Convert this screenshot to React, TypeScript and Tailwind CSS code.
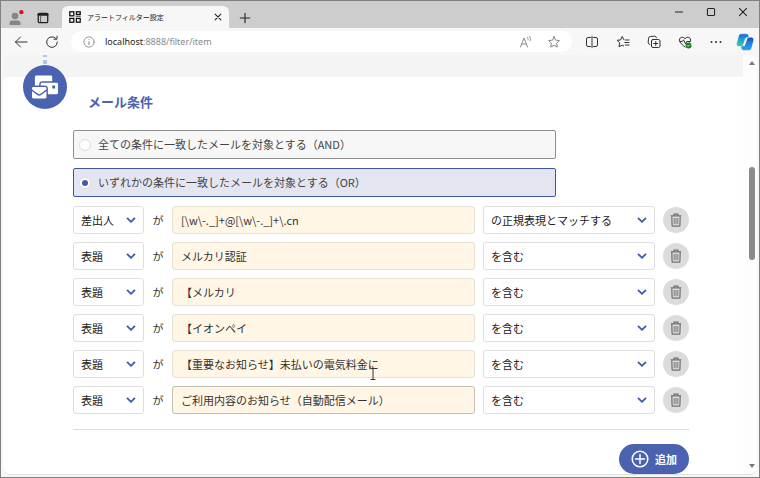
import { useState, type ReactNode } from 'react';
import clsx from 'clsx';
import { FaMailBulk } from 'react-icons/fa';

interface Condition {
  id: number;
  field: string;
  value: string;
  match: string;
}

const FIELDS = ['差出人', '表題', '本文'];
const MATCHES = ['を含む', 'を含まない', 'の正規表現とマッチする'];

const INITIAL: Condition[] = [
  { id: 1, field: '差出人', value: '[\\w\\-._]+@[\\w\\-._]+\\.cn', match: 'の正規表現とマッチする' },
  { id: 2, field: '表題', value: 'メルカリ認証', match: 'を含む' },
  { id: 3, field: '表題', value: '【メルカリ', match: 'を含む' },
  { id: 4, field: '表題', value: '【イオンペイ', match: 'を含む' },
  { id: 5, field: '表題', value: '【重要なお知らせ】未払いの電気料金に', match: 'を含む' },
  { id: 6, field: '表題', value: 'ご利用内容のお知らせ（自動配信メール）', match: 'を含む' },
];

function IconButton({ label, className, children }: { label: string; className?: string; children: ReactNode }) {
  return (
    <button type="button" aria-label={label} className={clsx('flex shrink-0 items-center justify-center', className)}>
      {children}
    </button>
  );
}

function Line({ children, className = 'size-3.5' }: { children: ReactNode; className?: string }) {
  return (
    <svg
      viewBox="0 0 14 14"
      fill="none"
      stroke="currentColor"
      strokeLinecap="round"
      strokeLinejoin="round"
      className={className}
    >
      {children}
    </svg>
  );
}

const STAR = 'M7 1.6l1.6 3.5 3.8.5-2.8 2.6.7 3.9L7 10.2l-3.3 1.9.7-3.9L1.6 5.6l3.8-.5z';

function TabBar() {
  return (
    <div className="flex h-[27px] shrink-0 bg-[#cdcdcd] pl-px text-[#222]">
      <IconButton label="プロファイル" className="w-[27px] pt-1.5">
        <svg viewBox="0 0 16 16" className="size-4">
          <circle cx="7" cy="6" r="3.3" fill="#8a8583" />
          <path d="M1.5 15v-1.6c0-1.7 1.2-2.9 2.8-2.9h5.4c1.6 0 2.8 1.2 2.8 2.9V15z" fill="#8a8583" />
          <circle cx="13.4" cy="2.2" r="2.1" fill="#e30b17" />
        </svg>
      </IconButton>
      <IconButton label="タブ操作" className="w-[27px] pt-1.5">
        <Line className="size-3">
          <rect x="1.5" y="1.5" width="11" height="11" rx="1.5" strokeWidth="1.5" />
          <path d="M2 3h10" strokeWidth="3" />
          <path d="M4.2 5v7" strokeWidth=".8" />
        </Line>
      </IconButton>
      <div className="mt-[5px] ml-1.5 flex w-[167px] items-center rounded-t-md bg-[#f7f7f7] pr-1 pl-[7px]">
        <svg viewBox="0 0 12 12" fill="none" stroke="#111" strokeWidth="1.3" className="size-3 shrink-0">
          <rect x=".8" y=".8" width="4" height="4" />
          <rect x="7.4" y=".8" width="3.8" height="2.6" />
          <path d="M6.7 5.2h5" strokeWidth=".9" />
          <rect x=".8" y="7.4" width="4" height="3.8" />
          <rect x="7.4" y="7.4" width="3.8" height="3.8" />
        </svg>
        <span className="ml-1.5 flex-1 truncate text-[7px]">アラートフィルター設定</span>
        <IconButton label="タブを閉じる" className="size-3.5">
          <Line className="size-2.5">
            <path d="M3 3l8 8M11 3l-8 8" strokeWidth="1.5" />
          </Line>
        </IconButton>
      </div>
      <IconButton label="新しいタブ" className="w-[31px] pt-1.5">
        <Line className="size-3">
          <path d="M7 1.5v11M1.5 7h11" strokeWidth="1.3" />
        </Line>
      </IconButton>
      <div className="ml-auto flex h-[21px]">
        <IconButton label="最小化" className="w-8">
          <Line className="size-2.5">
            <path d="M2 7h10" strokeWidth="1.4" />
          </Line>
        </IconButton>
        <IconButton label="最大化" className="w-8">
          <Line className="size-2.5">
            <rect x="2" y="2" width="10" height="10" rx="1.5" strokeWidth="1.5" />
          </Line>
        </IconButton>
        <IconButton label="閉じる" className="w-8">
          <Line className="size-2.5">
            <path d="M2 2l10 10M12 2L2 12" strokeWidth="1.5" />
          </Line>
        </IconButton>
      </div>
    </div>
  );
}

function Toolbar() {
  return (
    <div className="flex h-[27px] shrink-0 items-center bg-[#f7f7f7] pl-1 text-[#333]">
      <IconButton label="戻る" className="w-[31px]">
        <Line>
          <path d="M1.5 7h11.5M6.5 2L1.500 7l5 5" />
        </Line>
      </IconButton>
      <IconButton label="更新" className="w-[31px]">
        <Line>
          <path d="M12.3 7A5.3 5.3 0 1 1 10.4 3M12 1.2v3H9" />
        </Line>
      </IconButton>
      <div className="mx-1 flex h-[21px] flex-1 items-center rounded-full bg-white pr-1 pl-3 text-[#888]">
        <Line className="size-3">
          <circle cx="7" cy="7" r="6" />
          <path d="M7 6.500v3.500M7 4v.2" strokeWidth="1.2" />
        </Line>
        <span className="ml-2.5 flex-1 font-['Noto_Sans'] text-[9px]">
          <span className="text-[#222]">localhost</span>:8888/filter/item
        </span>
        <IconButton label="音声で読み上げる" className="w-7">
          <Line>
            <path d="M1.5 12L5 3l3.5 9M2.8 9h4.400" />
            <path d="M8.300 2.300c.8.800 1 1.700.7 2.700M10.300 1.200c1.300 1.400 1.600 2.900 1 4.600" strokeWidth=".9" />
          </Line>
        </IconButton>
        <IconButton label="お気に入りに追加" className="w-7">
          <Line>
            <path d={STAR} />
          </Line>
        </IconButton>
      </div>
      <IconButton label="画面を分割する" className="w-[31px]">
        <Line>
          <path d="M5.500 2.500H3A1.500 1.500 0 0 0 1.500 4v6A1.500 1.500 0 0 0 3 11.500h2.500M8.500 2.500H11A1.500 1.500 0 0 1 12.500 4v6a1.500 1.500 0 0 1-1.500 1.500H8.500M7 1.300v11.400" />
        </Line>
      </IconButton>
      <IconButton label="お気に入り" className="w-[31px]">
        <Line>
          <path d="M8 4.800L6.200 1.500 4.600 4.900l-3.500.4 2.600 2.500-.7 4 3.200-1.700 1.500.8M9.500 5h3.500M8.800 7.500H13M9.500 10H13" />
        </Line>
      </IconButton>
      <IconButton label="コレクション" className="w-[31px]">
        <Line>
          <rect x="4.500" y="4.500" width="8.500" height="8" rx="1.500" />
          <path d="M8.750 6.500v4M6.750 8.500h4M2.800 9.500A2 2 0 0 1 1.200 7.500L1.500 3.500a2 2 0 0 1 2-2l4-.3a2 2 0 0 1 2 1.500" />
        </Line>
      </IconButton>
      <IconButton label="ブラウザーのエッセンシャル" className="w-[31px]">
        <Line>
          <path d="M7 3.600C5.800 1.500 1.500 1.500 1.500 5c0 3 3.500 5.500 5.500 7M7 3.600C8.200 1.500 12.500 1.500 12.500 5c0 .7-.2 1.400-.5 2M1.800 6.500h2.500L5.500 4.800l2 4 1.200-2.300h3" />
          <circle cx="10.500" cy="10.500" r="3" fill="#12801f" stroke="none" />
          <path d="M9.300 10.600l.8.800 1.500-1.500" stroke="#fff" strokeWidth=".8" />
        </Line>
      </IconButton>
      <IconButton label="設定など" className="w-[31px]">
        <Line>
          <path d="M2.500 7h.01M7 7h.01M11.500 7h.01" strokeWidth="2" />
        </Line>
      </IconButton>
      <IconButton label="Copilot" className="w-7">
        <svg viewBox="0 0 18 18" className="size-[18px]">
          <defs>
            <linearGradient id="cp-a" x1="0" y1="0" x2="0" y2="1">
              <stop offset="0" stopColor="#1c63d8" />
              <stop offset=".4" stopColor="#1f96d8" />
              <stop offset="1" stopColor="#3fcf8b" />
            </linearGradient>
            <linearGradient id="cp-b" x1="0" y1="0" x2="0" y2="1">
              <stop offset="0" stopColor="#1747a8" />
              <stop offset=".4" stopColor="#1f7fe0" />
              <stop offset="1" stopColor="#25a9ee" />
            </linearGradient>
          </defs>
          <path d="M12.800 17.200H7.600c-1.400 0-2-.8-2.300-2.200L5 12.800h1.500c1.400 0 2-.8 2.400-2l1.400-4.300c.4-1.200 1-2 2.500-2h2.500c1.800 0 2.500 1.600 2 3.400l-1.800 6.800c-.5 1.700-1.300 2.500-2.700 2.500z" fill="url(#cp-b)" />
          <path d="M5.200.8h5.200c1.400 0 2 .8 2.300 2.200l.3 1.700h-1.500c-1.400 0-2 .8-2.400 2l-1.400 4.800c-.4 1.200-1 2-2.500 2H2.700c-1.800 0-2.500-1.600-2-3.400l1.800-6.800C3 1.600 3.800.8 5.200.8z" fill="url(#cp-a)" stroke="#f7f7f7" strokeWidth=".5" />
          <path d="M10.600 5.500L8 12.200" stroke="#f7f7f7" strokeWidth="1.800" strokeLinecap="round" />
        </svg>
      </IconButton>
    </div>
  );
}

interface SelectProps {
  label: string;
  value: string;
  options: string[];
  onChange: (value: string) => void;
  className?: string;
}

function Select({ label, value, options, onChange, className }: SelectProps) {
  return (
    <div className={clsx('relative', className)}>
      <select
        aria-label={label}
        value={value}
        onChange={e => onChange(e.target.value)}
        className="h-7 w-full appearance-none rounded-[3px] border border-[#dfdfdf] bg-white pl-[7px] text-[11px] text-[#222]"
      >
        {options.map(o => (
          <option key={o}>{o}</option>
        ))}
      </select>
      <svg
        viewBox="0 0 10 6"
        fill="none"
        stroke="#4058ae"
        strokeWidth="1.8"
        className="pointer-events-none absolute top-[11px] right-2 h-1.5 w-2.5"
      >
        <path d="M1 .8l4 4 4-4" />
      </svg>
    </div>
  );
}

function ConditionRow({
  condition,
  active,
  onChange,
  onRemove,
}: {
  condition: Condition;
  active: boolean;
  onChange: (patch: Partial<Condition>) => void;
  onRemove: () => void;
}) {
  return (
    <li className="flex h-7 items-center">
      <Select
        label="項目"
        value={condition.field}
        options={FIELDS}
        onChange={field => onChange({ field })}
        className="w-[71px]"
      />
      <span className="w-7 text-center text-[11px]">が</span>
      <input
        type="text"
        aria-label="条件"
        value={condition.value}
        onChange={e => onChange({ value: e.target.value })}
        className={clsx(
          'h-7 min-w-0 flex-1 rounded-[3px] border bg-[#fff6e6] px-2 text-[11px] text-[#333] outline-none',
          active ? 'border-[#c4bfb3]' : 'border-[#e6dfd2]',
        )}
      />
      <Select
        label="一致方法"
        value={condition.match}
        options={MATCHES}
        onChange={match => onChange({ match })}
        className="ml-2 w-[172px]"
      />
      <button
        type="button"
        aria-label="削除"
        onClick={onRemove}
        className="ml-2 flex size-[26px] items-center justify-center rounded-full bg-[#dcdcdc]"
      >
        <svg viewBox="0 0 12 14" fill="none" stroke="#707070" className="h-3.5 w-3">
          <path d="M.8 2.800h10.400M4 2.800V1.200h4v1.600" strokeWidth="1.200" />
          <path d="M1.800 3.200l.3 9.200c0 .5.3.8.8.8h6.200c.5 0 .8-.3.800-.8l.3-9.200" strokeWidth="1.200" />
          <path d="M4.200 5v6.200M6 5v6.200M7.800 5v6.200" strokeWidth=".9" />
        </svg>
      </button>
    </li>
  );
}

function ModeOption({
  label,
  checked,
  onSelect,
}: {
  label: string;
  checked: boolean;
  onSelect: () => void;
}) {
  return (
    <label
      className={clsx(
        'flex h-[29px] w-[483px] max-w-full items-center gap-[7px] rounded-[2px] border pl-[5px] text-[11px] text-[#444]',
        checked ? 'border-[#3f55a8] bg-[#e3e5f1]' : 'border-[#8c8c8c] bg-[#f7f7f7]',
      )}
    >
      <input
        type="radio"
        name="mode"
        checked={checked}
        onChange={onSelect}
        className="grid size-3 appearance-none place-content-center rounded-full border border-[#dcdcdc] bg-white before:size-1.5 before:rounded-full checked:before:bg-[#4058ae]"
      />
      {label}
    </label>
  );
}

export default function App() {
  const [mode, setMode] = useState<'and' | 'or'>('or');
  const [conditions, setConditions] = useState(INITIAL);

  const update = (id: number, patch: Partial<Condition>) =>
    setConditions(list => list.map(c => (c.id === id ? { ...c, ...patch } : c)));

  const add = () =>
    setConditions(list => [...list, { id: Date.now(), field: '表題', value: '', match: 'を含む' }]);

  return (
    <div className="relative flex h-screen flex-col overflow-hidden border border-[#808080] bg-[#f7f7f7] font-['Noto_Sans_CJK_JP',sans-serif] text-[#333]">
      <TabBar />
      <Toolbar />

      <div className="mx-0.5 mb-0.5 flex min-h-0 flex-1 overflow-hidden rounded-lg border-b border-[#dedede] bg-[#f4f4f4]">
        <main className="min-w-0 flex-1 overflow-hidden pt-[22px]">
          <section className="flex min-h-full rounded-tl-md bg-white">
            <div className="w-[70px] shrink-0 pl-5">
              {/* Step marker with the connector coming from the previous step */}
              <div className="relative -mt-3 flex size-11 items-center justify-center rounded-full bg-[#4b62b1]">
                <span className="absolute bottom-full left-1/2 -ml-0.5 flex w-1 flex-col gap-[3px] pb-px">
                  <span className="h-1 bg-[#b7c2e6]"></span>
                  <span className="h-1 bg-[#b7c2e6]"></span>
                </span>
                <FaMailBulk className="size-[26px] text-white" />
              </div>
            </div>

            <div className="min-w-0 flex-1 pt-[15px] pr-[54px]">
              <h2 className="pl-[15px] text-[13px] leading-5 font-bold text-[#4b62b1]">メール条件</h2>

              <div role="radiogroup" aria-label="メール条件" className="mt-[18px] flex flex-col gap-[9px]">
                <ModeOption
                  label="全ての条件に一致したメールを対象とする（AND）"
                  checked={mode === 'and'}
                  onSelect={() => setMode('and')}
                />
                <ModeOption
                  label="いずれかの条件に一致したメールを対象とする（OR）"
                  checked={mode === 'or'}
                  onSelect={() => setMode('or')}
                />
              </div>

              <ul className="mt-[9px] flex flex-col gap-2">
                {conditions.map((c, i) => (
                  <ConditionRow
                    key={c.id}
                    condition={c}
                    active={i === conditions.length - 1}
                    onChange={patch => update(c.id, patch)}
                    onRemove={() => setConditions(list => list.filter(x => x.id !== c.id))}
                  />
                ))}
              </ul>

              <div className="mt-[15px] flex justify-end border-t border-[#dcdcdc] pt-[14px]">
                <button
                  type="button"
                  onClick={add}
                  className="flex h-[30px] w-[70px] items-center justify-center gap-1.5 rounded-full bg-[#4b62b1] text-[11px] font-bold text-white"
                >
                  <svg viewBox="0 0 18 18" fill="none" stroke="currentColor" strokeWidth="1.5" className="size-[18px]">
                    <circle cx="9" cy="9" r="7.8" />
                    <path d="M9 4.500v9M4.500 9h9" strokeLinecap="round" />
                  </svg>
                  追加
                </button>
              </div>
            </div>
          </section>
        </main>

        {/* Scrollbar */}
        <div className="flex w-3.5 shrink-0 flex-col items-center justify-between bg-[#fdfdfd] py-1.5 pl-1">
          <svg viewBox="0 0 6 4" fill="#777" className="h-1 w-1.5">
            <path d="M3 0l3 4H0z" />
          </svg>
          <div className="flex w-1.5 flex-1 flex-col pt-[102px]">
            <div className="h-[93px] rounded-full bg-[#8b8b8b]"></div>
          </div>
          <svg viewBox="0 0 6 4" fill="#777" className="h-1 w-1.5">
            <path d="M3 4L0 0h6z" />
          </svg>
        </div>
      </div>

      {/* Text cursor */}
      <svg
        viewBox="0 0 6 12"
        fill="none"
        stroke="#333"
        className="pointer-events-none absolute top-[367px] left-[369px] h-3 w-1.5"
      >
        <path d="M.5.5h5M3 .5v11M.5 11.500h5" />
      </svg>
    </div>
  );
}
